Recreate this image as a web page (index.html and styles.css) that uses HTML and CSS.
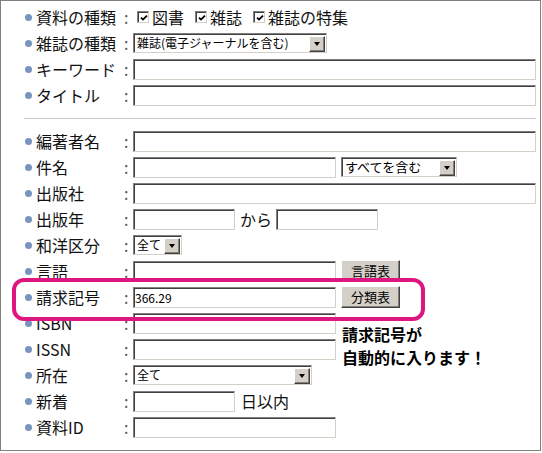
FILE: index.html
```html
<!DOCTYPE html>
<html lang="ja">
<head>
<meta charset="utf-8">
<title>詳細検索</title>
<link rel="stylesheet" href="styles.css">
</head>
<body>
<div class="panel">
  <div class="section">
    <div class="row">
      <span class="bullet"></span><span class="label">資料の種類</span><span class="colon">:</span>
      <div class="checks">
        <span class="check"><span class="box"><svg viewBox="0 0 8 8" width="8" height="8"><polyline points="1,3.6 3,5.6 7,1.6" fill="none" stroke="#000" stroke-width="1.8"/></svg></span>図書</span>
        <span class="check"><span class="box"><svg viewBox="0 0 8 8" width="8" height="8"><polyline points="1,3.6 3,5.6 7,1.6" fill="none" stroke="#000" stroke-width="1.8"/></svg></span>雑誌</span>
        <span class="check"><span class="box"><svg viewBox="0 0 8 8" width="8" height="8"><polyline points="1,3.6 3,5.6 7,1.6" fill="none" stroke="#000" stroke-width="1.8"/></svg></span>雑誌の特集</span>
      </div>
    </div>
    <div class="row">
      <span class="bullet"></span><span class="label">雑誌の種類</span><span class="colon">:</span>
      <div class="select sel-genre"><span class="sel-text">雑誌(電子ジャーナルを含む)</span><span class="sel-arrow"></span></div>
    </div>
    <div class="row">
      <span class="bullet"></span><span class="label">キーワード</span><span class="colon">:</span>
      <input class="input w-long" type="text">
    </div>
    <div class="row">
      <span class="bullet"></span><span class="label">タイトル</span><span class="colon">:</span>
      <input class="input w-long" type="text">
    </div>
  </div>
  <hr class="divider">
  <div class="section">
    <div class="row">
      <span class="bullet"></span><span class="label">編著者名</span><span class="colon">:</span>
      <input class="input w-long" type="text">
    </div>
    <div class="row">
      <span class="bullet"></span><span class="label">件名</span><span class="colon">:</span>
      <input class="input w-mid" type="text">
      <div class="select sel-subject after"><span class="sel-text big">すべてを含む</span><span class="sel-arrow"></span></div>
    </div>
    <div class="row">
      <span class="bullet"></span><span class="label">出版社</span><span class="colon">:</span>
      <input class="input w-long" type="text">
    </div>
    <div class="row">
      <span class="bullet"></span><span class="label">出版年</span><span class="colon">:</span>
      <input class="input w-short" type="text">
      <span class="inline-text from">から</span>
      <input class="input w-short" type="text">
    </div>
    <div class="row">
      <span class="bullet"></span><span class="label">和洋区分</span><span class="colon">:</span>
      <div class="select sel-lang"><span class="sel-text">全て</span><span class="sel-arrow"></span></div>
    </div>
    <div class="row">
      <span class="bullet"></span><span class="label">言語</span><span class="colon">:</span>
      <input class="input w-mid" type="text">
      <button class="btn" type="button">言語表</button>
    </div>
    <div class="row">
      <span class="bullet"></span><span class="label">請求記号</span><span class="colon">:</span>
      <input class="input w-mid" type="text" value="366.29">
      <button class="btn" type="button">分類表</button>
    </div>
    <div class="row">
      <span class="bullet"></span><span class="label">ISBN</span><span class="colon">:</span>
      <input class="input w-mid" type="text">
    </div>
    <div class="row">
      <span class="bullet"></span><span class="label">ISSN</span><span class="colon">:</span>
      <input class="input w-mid" type="text">
    </div>
    <div class="row">
      <span class="bullet"></span><span class="label">所在</span><span class="colon">:</span>
      <div class="select sel-place"><span class="sel-text">全て</span><span class="sel-arrow"></span></div>
    </div>
    <div class="row">
      <span class="bullet"></span><span class="label">新着</span><span class="colon">:</span>
      <input class="input w-short" type="text">
      <span class="inline-text days">日以内</span>
    </div>
    <div class="row">
      <span class="bullet"></span><span class="label">資料ID</span><span class="colon">:</span>
      <input class="input w-mid" type="text">
    </div>
  </div>
  <div class="highlight"></div>
  <div class="note">請求記号が<br>自動的に入ります！</div>
</div>
</body>
</html>
```

FILE: styles.css
```css
* {
  box-sizing: border-box;
}

body {
  margin: 0;
  background: #fff;
  color: #000;
  font-family: "Noto Sans CJK JP", "Noto Sans", sans-serif;
}

.panel {
  position: relative;
  width: 541px;
  height: 451px;
  border: 1px solid #808080;
  padding-top: 3px;
}

.row {
  display: flex;
  align-items: center;
  height: 26px;
}

.bullet {
  flex: none;
  width: 7px;
  height: 7px;
  border-radius: 50%;
  background: #7895c0;
  margin-left: 24px;
  margin-right: 4px;
}

.label {
  flex: none;
  width: 86px;
  font-size: 16px;
  line-height: 20px;
  white-space: nowrap;
  color: #111;
}

.colon {
  flex: none;
  width: 11px;
  padding-left: 2px;
  font-size: 16px;
  line-height: 20px;
  color: #555;
}

.divider {
  border: 0;
  height: 1px;
  background: #c8c8c8;
  margin: 10px 4px 9px 23px;
}

/* checkboxes */
.checks {
  display: flex;
  align-items: center;
  padding-left: 4px;
  font-size: 16px;
  line-height: 20px;
  color: #111;
}

.check {
  display: flex;
  align-items: center;
  margin-right: 11px;
  white-space: nowrap;
}

.box {
  display: flex;
  align-items: center;
  justify-content: center;
  width: 12px;
  height: 12px;
  margin-right: 3px;
  background: #fff;
  border: 1px solid;
  border-color: #808080 #d4d0c8 #d4d0c8 #808080;
  box-shadow: inset 1px 1px 0 #404040;
}

.box svg {
  display: block;
  margin: 1px 0 0 1px;
}

/* text inputs */
.input {
  flex: none;
  height: 21px;
  margin: 0;
  padding: 0 1px;
  background: #fff;
  border: 1px solid;
  border-color: #808080 #d4d0c8 #d4d0c8 #808080;
  box-shadow: inset 1px 1px 0 #404040;
  font-family: "Noto Sans CJK JP", sans-serif;
  font-size: 12px;
  color: #000;
  outline: none;
}

.w-long {
  width: 403px;
}

.w-mid {
  width: 203px;
}

.w-short {
  width: 102px;
}

.inline-text {
  font-size: 16px;
  line-height: 20px;
  white-space: nowrap;
  color: #111;
}

.from {
  margin: 0 4px 0 5px;
}

.days {
  margin-left: 6px;
}

/* select boxes */
.select {
  flex: none;
  display: flex;
  align-items: center;
  height: 20px;
  padding: 0 1px 0 3px;
  background: #fff;
  border: 1px solid;
  border-color: #808080 #d4d0c8 #d4d0c8 #808080;
  box-shadow: inset 1px 1px 0 #404040;
}

.sel-genre {
  width: 194px;
}

.sel-subject {
  width: 116px;
}

.sel-lang {
  width: 49px;
}

.sel-place {
  width: 179px;
}

.after {
  margin-left: 5px;
}

.sel-text {
  flex: 1;
  font-size: 12px;
  line-height: 18px;
  white-space: nowrap;
}

.sel-text.big {
  font-size: 13px;
}

.sel-arrow {
  flex: none;
  display: flex;
  align-items: center;
  justify-content: center;
  width: 16px;
  height: 16px;
  margin-top: 1px;
  background: #d4d0c8;
  border: 1px solid;
  border-color: #fff #404040 #404040 #fff;
  box-shadow: inset -1px -1px 0 #808080;
}

.sel-arrow::after {
  content: "";
  width: 0;
  height: 0;
  border-left: 3.5px solid transparent;
  border-right: 3.5px solid transparent;
  border-top: 4px solid #000;
}

/* buttons */
.btn {
  flex: none;
  width: 59px;
  height: 22px;
  margin: 0 0 0 5px;
  padding: 0;
  background: #d4d0c8;
  border: 1px solid;
  border-color: #fff #404040 #404040 #fff;
  box-shadow: inset -1px -1px 0 #808080;
  font-family: "Noto Sans CJK JP", sans-serif;
  font-size: 13px;
  line-height: 18px;
  color: #000;
}

/* annotation overlay */
.highlight {
  position: absolute;
  left: 11px;
  top: 277px;
  width: 413px;
  height: 43px;
  border: 4px solid #dd177f;
  border-radius: 12px;
}

.note {
  position: absolute;
  left: 341px;
  top: 322px;
  font-size: 16px;
  font-weight: bold;
  line-height: 23px;
  white-space: nowrap;
}
```
